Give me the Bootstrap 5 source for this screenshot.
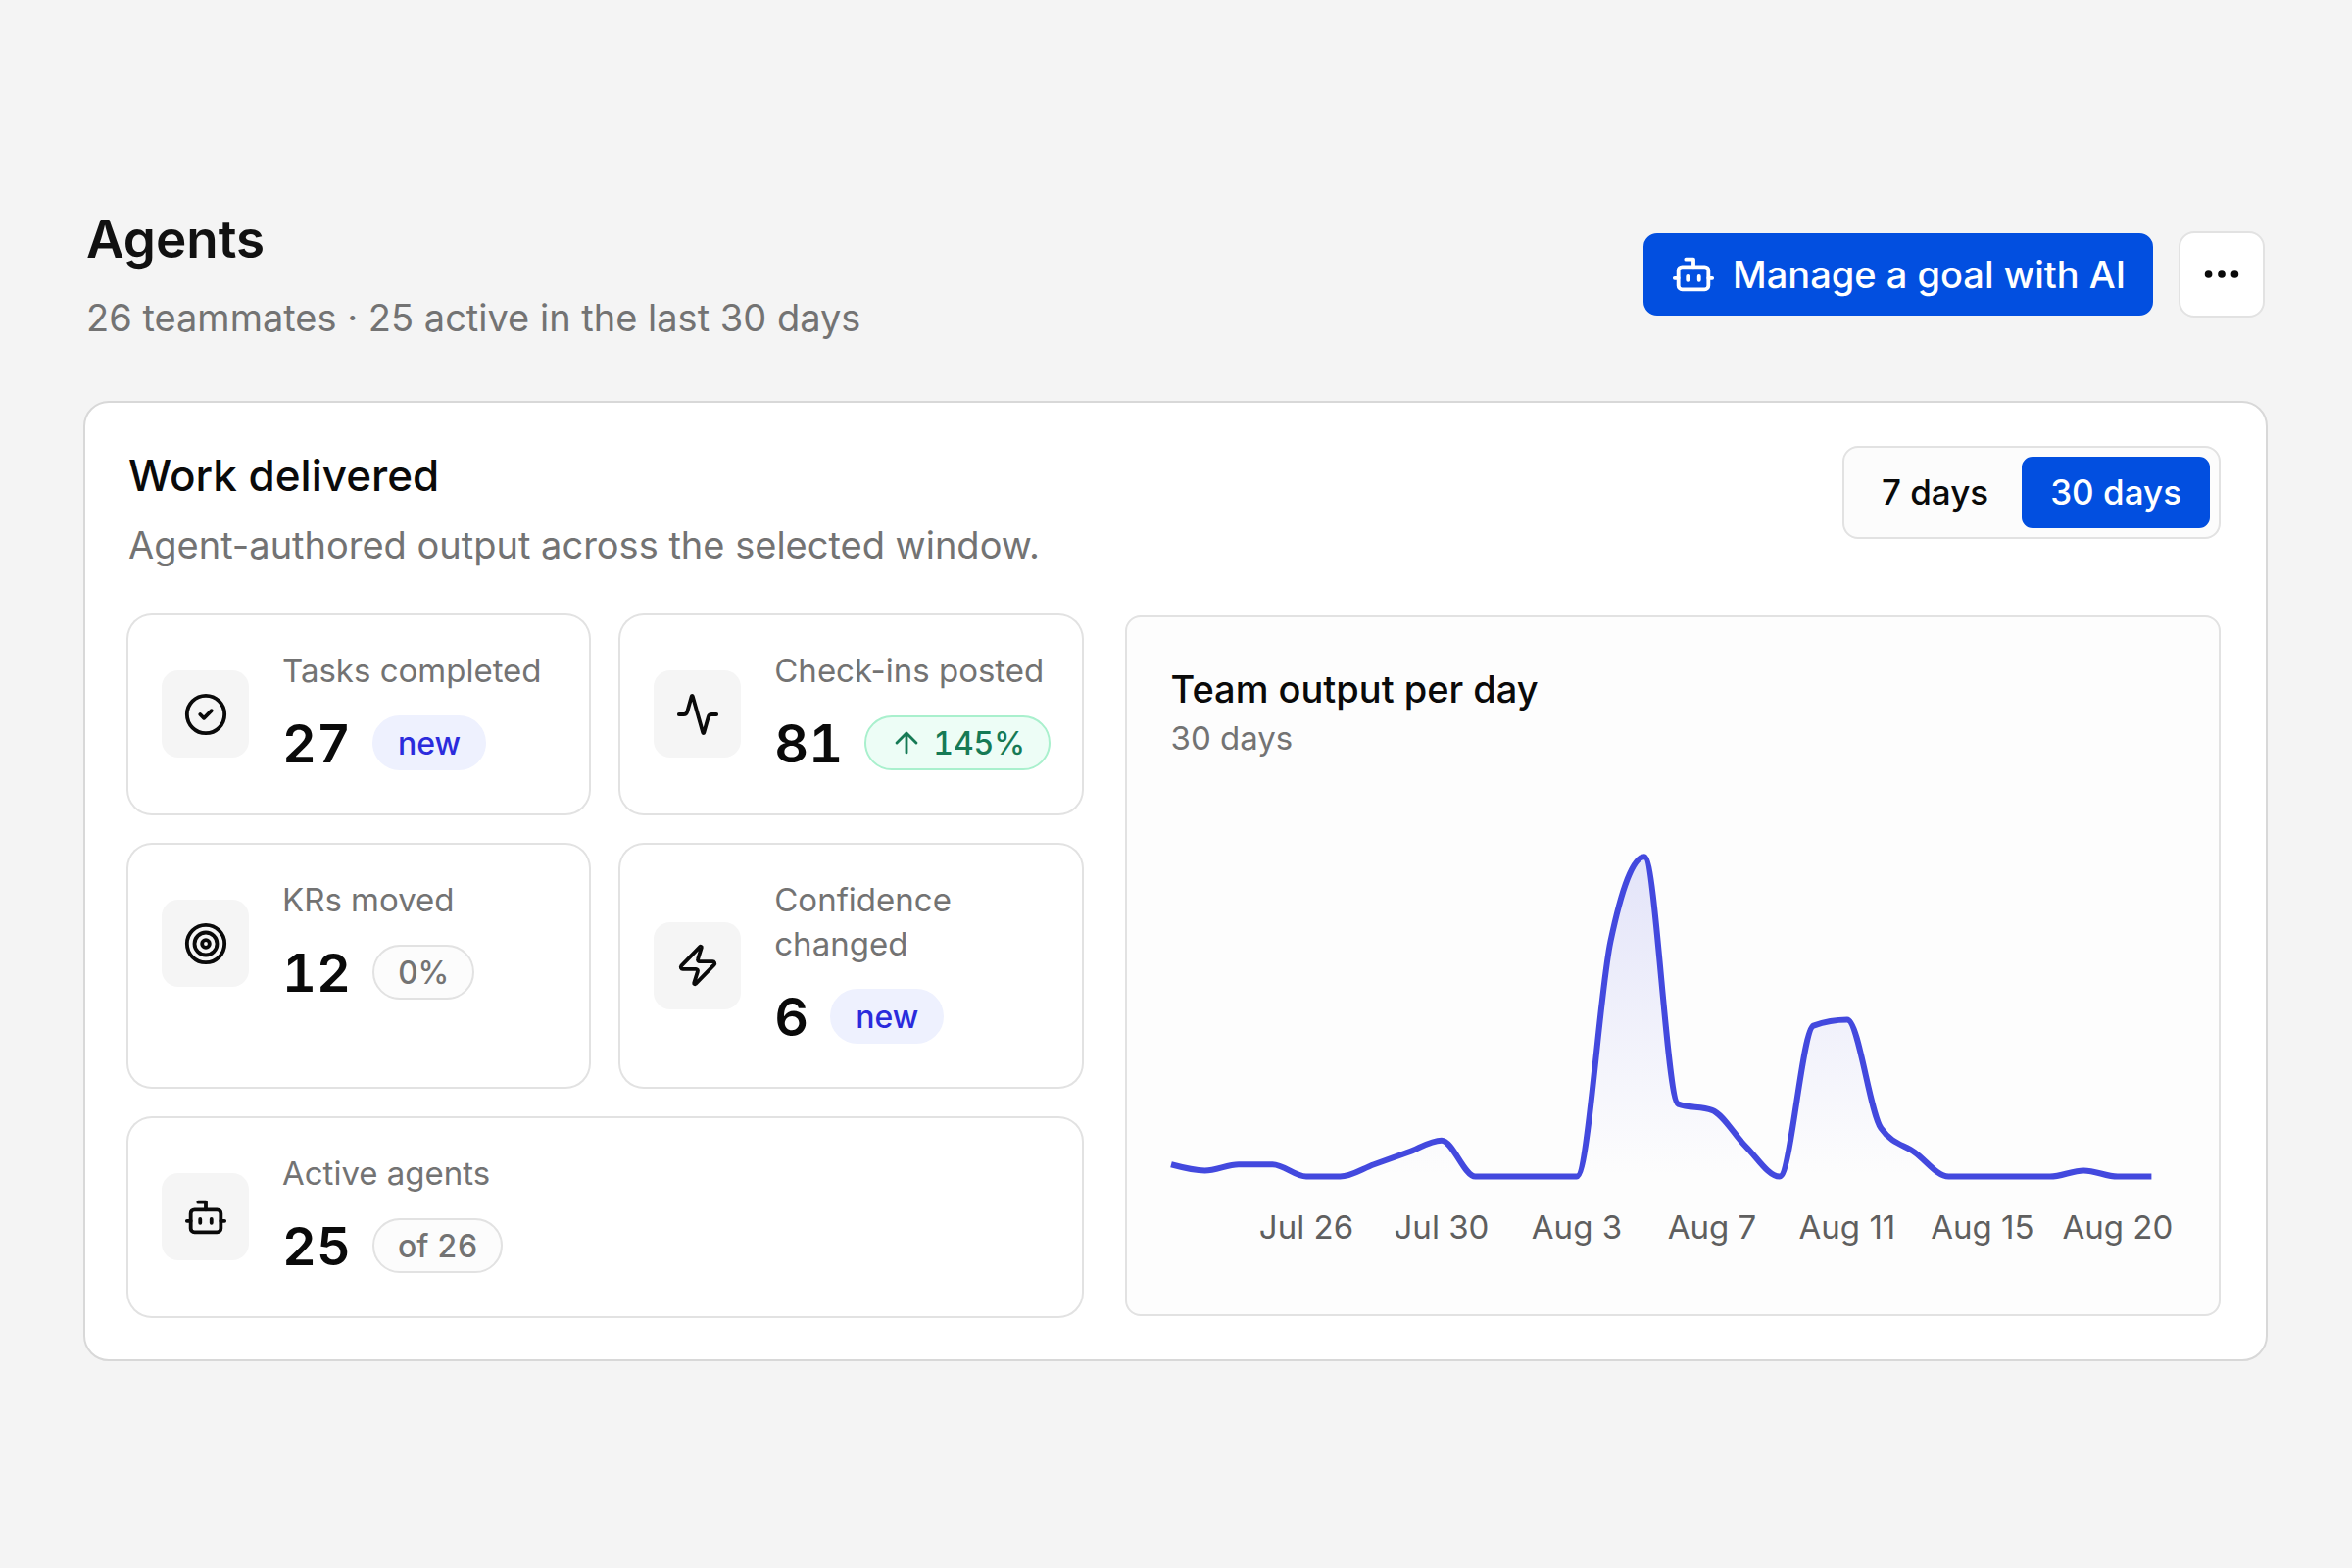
<!DOCTYPE html>
<html lang="en">
<head>
<meta charset="utf-8">
<meta name="viewport" content="width=device-width, initial-scale=1">
<title>Agents</title>
<link href="https://cdn.jsdelivr.net/npm/bootstrap@5.3.0/dist/css/bootstrap.min.css" rel="stylesheet">
<style>
:root{--ink:#0a0a0a;--muted:#737373;--line:#e2e2e2;--brand:#024fe0}
body{background:#f4f4f4;color:var(--ink);font-family:Inter,"Liberation Sans",sans-serif;font-size:33px;line-height:45px}
.page{padding:46px 86px 50px 85px}
.page-head{padding:0 3px;margin-bottom:57px}
.page-title{font-size:53px;line-height:72px;font-weight:600;color:#111;margin-bottom:16px}
.sub-text{font-size:38px;line-height:56px;color:var(--muted)}
.head-actions{gap:26px}
.ico{width:46px;height:46px;flex:none;fill:none;stroke:currentColor;stroke-width:2;stroke-linecap:round;stroke-linejoin:round}
.btn-ai{--bs-btn-bg:var(--brand);--bs-btn-border-color:var(--brand);--bs-btn-hover-bg:#0245c6;font-size:38px;line-height:56px;font-weight:500;padding:12px 26px;border-width:2px;border-radius:14px;gap:17px}
.btn-more{width:88px;height:88px;background:#fff;border:2px solid var(--line);border-radius:16px;color:var(--ink)}
.work-card{border:2px solid #d8d8d8;border-radius:26px;padding:44px 46px 44px 44px}
.work-title{font-size:44px;line-height:60px;font-weight:500;margin-bottom:13px}
.range{background:#fcfcfc;border:2px solid var(--line);border-radius:16px;padding:9px;gap:5px}
.range .btn{font-size:35px;line-height:49px;font-weight:500;padding:10px 27px;border-width:2px;border-radius:11px;color:var(--ink)}
.range .btn.active{background:var(--brand);border-color:var(--brand);color:#fff}
.work-grid{display:grid;grid-template-columns:1fr 1.15fr;gap:44px;margin-top:44px}
.stat-grid{display:grid;grid-template-columns:repeat(2,minmax(0,1fr));gap:32px}
.stat{background:#fff;border-radius:24px;box-shadow:0 0 0 2px var(--line);padding:34px}
.stat-wide{grid-column:1/-1}
.stat-body{gap:34px}
.stat-icon{width:89px;height:89px;flex:none;border-radius:17px;background:#f5f5f5}
.stat-label{color:var(--muted)}
.stat-row{margin-top:14px;gap:22px}
.stat-num{font-size:54px;line-height:75px;font-weight:600;font-variant-numeric:tabular-nums}
.pill{height:56px;font-size:32px;font-weight:500;padding:0 24px;border:2px solid;border-radius:28px;font-variant-numeric:tabular-nums;gap:10px;white-space:nowrap}
.pill .ico{width:34px;height:34px}
.pill-new{background:#eef1fe;border-color:#eef1fe;color:#2b2bdc}
.pill-up{background:#edfdf6;border-color:#a9f0cd;color:#167a55}
.pill-flat{background:#fcfcfc;border-color:var(--line);color:var(--muted)}
.chart-panel{background:#fdfdfd;border:2px solid var(--line);border-radius:16px;padding:45px}
.chart-title{font-size:38px;line-height:56px;font-weight:500;margin:0}
.chart{display:block;width:100%;height:auto;overflow:visible}
.chart text{font-size:33px;fill:#5f5f5f;text-anchor:middle}
@media (max-width:1500px){.work-grid{grid-template-columns:1fr}}
</style>
<script src="https://cdn.jsdelivr.net/npm/bootstrap@5.3.0/dist/js/bootstrap.bundle.min.js" defer></script>
</head>
<body>
<svg class="d-none" aria-hidden="true">
  <symbol id="i-bot" viewBox="0 0 24 24"><path d="M12 8V4H8"/><rect x="4" y="8" width="16" height="12" rx="2"/><path d="M2 14h2M20 14h2M15 13v2M9 13v2"/></symbol>
  <symbol id="i-dots" viewBox="0 0 24 24"><circle cx="5" cy="12" r="1"/><circle cx="12" cy="12" r="1"/><circle cx="19" cy="12" r="1"/></symbol>
  <symbol id="i-check" viewBox="0 0 24 24"><circle cx="12" cy="12" r="10"/><path d="m9 12 2 2 4-4"/></symbol>
  <symbol id="i-pulse" viewBox="0 0 24 24"><path d="M22 12h-2.48a2 2 0 0 0-1.93 1.46l-2.35 8.36a.25.25 0 0 1-.48 0L9.24 2.18a.25.25 0 0 0-.48 0l-2.35 8.36A2 2 0 0 1 4.49 12H2"/></symbol>
  <symbol id="i-target" viewBox="0 0 24 24"><circle cx="12" cy="12" r="10"/><circle cx="12" cy="12" r="6"/><circle cx="12" cy="12" r="2"/></symbol>
  <symbol id="i-zap" viewBox="0 0 24 24"><path d="M4 14a1 1 0 0 1-.78-1.63l9.9-10.2a.5.5 0 0 1 .86.46l-1.92 6.02A1 1 0 0 0 13 10h7a1 1 0 0 1 .78 1.63l-9.9 10.2a.5.5 0 0 1-.86-.46l1.92-6.02A1 1 0 0 0 11 14z"/></symbol>
  <symbol id="i-up" viewBox="0 0 24 24"><path d="m5 12 7-7 7 7M12 19V5"/></symbol>
</svg>

<main class="page min-vh-100 d-flex flex-column justify-content-center">
  <header class="page-head d-flex flex-wrap align-items-center justify-content-between gap-4">
    <div>
      <h1 class="page-title">Agents</h1>
      <p class="sub-text mb-0">26 teammates · 25 active in the last 30 days</p>
    </div>
    <div class="head-actions d-flex align-items-center">
      <button type="button" class="btn btn-primary btn-ai d-flex align-items-center"><svg class="ico" aria-hidden="true"><use href="#i-bot"/></svg>Manage a goal with AI</button>
      <button type="button" class="btn btn-more d-flex align-items-center justify-content-center p-0" aria-label="More actions"><svg class="ico" aria-hidden="true"><use href="#i-dots"/></svg></button>
    </div>
  </header>

  <section class="card work-card" aria-labelledby="work-title">
    <div class="d-flex flex-wrap align-items-start justify-content-between gap-4">
      <div>
        <h2 class="work-title" id="work-title">Work delivered</h2>
        <p class="sub-text mb-0">Agent-authored output across the selected window.</p>
      </div>
      <div class="range d-flex" role="group" aria-label="Time window">
        <button type="button" class="btn" aria-pressed="false">7 days</button>
        <button type="button" class="btn active" aria-pressed="true">30 days</button>
      </div>
    </div>

    <div class="work-grid">
      <div class="stat-grid">
        <div class="stat">
          <div class="stat-body d-flex align-items-center">
            <div class="stat-icon d-flex align-items-center justify-content-center"><svg class="ico" aria-hidden="true"><use href="#i-check"/></svg></div>
            <div>
              <div class="stat-label">Tasks completed</div>
              <div class="stat-row d-flex align-items-center"><span class="stat-num">27</span><span class="pill pill-new d-inline-flex align-items-center">new</span></div>
            </div>
          </div>
        </div>
        <div class="stat">
          <div class="stat-body d-flex align-items-center">
            <div class="stat-icon d-flex align-items-center justify-content-center"><svg class="ico" aria-hidden="true"><use href="#i-pulse"/></svg></div>
            <div>
              <div class="stat-label">Check-ins posted</div>
              <div class="stat-row d-flex align-items-center"><span class="stat-num">81</span><span class="pill pill-up d-inline-flex align-items-center"><svg class="ico" aria-hidden="true"><use href="#i-up"/></svg>145%</span></div>
            </div>
          </div>
        </div>
        <div class="stat">
          <div class="stat-body d-flex align-items-center">
            <div class="stat-icon d-flex align-items-center justify-content-center"><svg class="ico" aria-hidden="true"><use href="#i-target"/></svg></div>
            <div>
              <div class="stat-label">KRs moved</div>
              <div class="stat-row d-flex align-items-center"><span class="stat-num">12</span><span class="pill pill-flat d-inline-flex align-items-center">0%</span></div>
            </div>
          </div>
        </div>
        <div class="stat">
          <div class="stat-body d-flex align-items-center">
            <div class="stat-icon d-flex align-items-center justify-content-center"><svg class="ico" aria-hidden="true"><use href="#i-zap"/></svg></div>
            <div>
              <div class="stat-label">Confidence changed</div>
              <div class="stat-row d-flex align-items-center"><span class="stat-num">6</span><span class="pill pill-new d-inline-flex align-items-center">new</span></div>
            </div>
          </div>
        </div>
        <div class="stat stat-wide">
          <div class="stat-body d-flex align-items-center">
            <div class="stat-icon d-flex align-items-center justify-content-center"><svg class="ico" aria-hidden="true"><use href="#i-bot"/></svg></div>
            <div>
              <div class="stat-label">Active agents</div>
              <div class="stat-row d-flex align-items-center"><span class="stat-num">25</span><span class="pill pill-flat d-inline-flex align-items-center">of 26</span></div>
            </div>
          </div>
        </div>
      </div>

      <div class="chart-panel">
        <h3 class="chart-title">Team output per day</h3>
        <div class="stat-label">30 days</div>
        <svg class="chart" id="chart" viewBox="0 0 1023 519" role="img" aria-label="Team output per day, last 30 days">
          <defs><linearGradient id="fade" x1="0" y1="0" x2="0" y2="1"><stop offset="0" stop-color="#4349e0" stop-opacity=".14"/><stop offset="1" stop-color="#4349e0" stop-opacity="0"/></linearGradient></defs>
          <path id="area" fill="url(#fade)"/>
          <path id="line" fill="none" stroke="#4349de" stroke-width="6" stroke-linejoin="round"/>
          <g id="ticks"></g>
        </svg>
      </div>
    </div>
  </section>
</main>

<script>
// Daily output and the labelled days, by index
const data = [2,1,2,2,0,0,2,4,6,0,0,0,0,39,53,12,11,5,0,25,26,8,4,0,0,0,0,1,0,0];
const labels = {4:'Jul 26', 8:'Jul 30', 12:'Aug 3', 16:'Aug 7', 20:'Aug 11', 24:'Aug 15', 28:'Aug 20'};
const plotWidth = 999, baseY = 424, peakY = 98;
const step = plotWidth / (data.length - 1);
const unit = (baseY - peakY) / Math.max(...data);
const pts = data.map((v, i) => [i * step, baseY - v * unit]);

// Monotone cubic interpolation
const n = pts.length;
const slope = pts.slice(1).map((p, i) => (p[1] - pts[i][1]) / step);
const tan = pts.map((p, i) => {
  if (i === 0 || i === n - 1) return null;
  const a = slope[i - 1], b = slope[i];
  return (Math.sign(a) + Math.sign(b)) * Math.min(Math.abs(a), Math.abs(b), Math.abs(a + b) / 4) || 0;
});
tan[0] = (3 * slope[0] - tan[1]) / 2;
tan[n - 1] = (3 * slope[n - 2] - tan[n - 2]) / 2;
let d = `M${pts[0]}`;
for (let i = 1; i < n; i++) {
  const [x0, y0] = pts[i - 1], [x1, y1] = pts[i], h = step / 3;
  d += `C${x0 + h},${y0 + h * tan[i - 1]} ${x1 - h},${y1 - h * tan[i]} ${x1},${y1}`;
}
document.getElementById('line').setAttribute('d', d);
document.getElementById('area').setAttribute('d', `${d}L${plotWidth},${baseY}L0,${baseY}Z`);
document.getElementById('ticks').innerHTML = Object.entries(labels)
  .map(([i, t]) => `<text x="${i * step}" y="487">${t}</text>`).join('');
document.querySelectorAll('.range .btn').forEach(b => b.addEventListener('click', () => {
  document.querySelectorAll('.range .btn').forEach(o => { o.classList.toggle('active', o === b); o.setAttribute('aria-pressed', o === b); });
}));
</script>
</body>
</html>
